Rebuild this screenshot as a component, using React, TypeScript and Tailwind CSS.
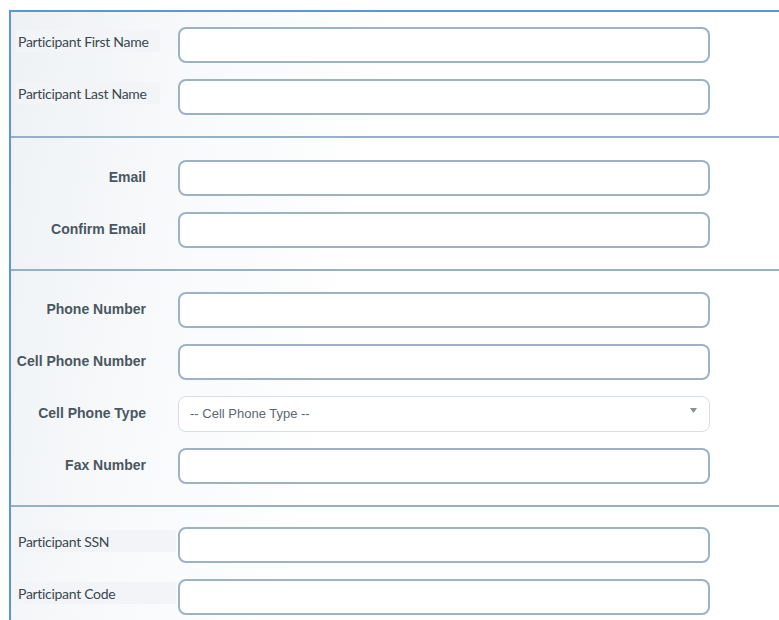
import React from "react";

type Field = { label: string; kind?: "input" | "select" };

const calibri = "font-['Lato','Open_Sans',sans-serif]";
const arial = "font-['Liberation_Sans',Arial,sans-serif]";

function TextBox() {
  return (
    <input
      type="text"
      className="h-[36px] w-[532px] rounded-[8px] border-2 border-[#9eb1c5] bg-white px-3 outline-none"
    />
  );
}

function SelectBox() {
  return (
    <div className="relative flex h-[36px] w-[532px] items-center rounded-[8px] border border-[#d6dee6] bg-white pl-[11px]">
      <span className={`${arial} text-[13px] text-[#5b6771]`}>-- Cell Phone Type --</span>
      <svg className="absolute right-[12px] top-[11px]" width="7" height="5" viewBox="0 0 7 5">
        <path d="M0 0 H7 L3.5 5 Z" fill="#8a8f94" />
      </svg>
    </div>
  );
}

function PlainRow({ field, wide }: { field: Field; wide?: boolean }) {
  return (
    <div className="flex items-start">
      <div className="w-[167px] pl-[5px] pt-[3px]">
        <div
          className={`${calibri} flex h-[22px] ${
            wide ? "w-[160px]" : "w-[144px]"
          } items-center pl-[2px] text-[14px] tracking-[-0.3px] text-[#3b4850] bg-[#f2f4f7]`}
        >
          {field.label}
        </div>
      </div>
      <TextBox />
    </div>
  );
}

function BoldRow({ field }: { field: Field }) {
  return (
    <div className="flex items-center">
      <div
        className={`${arial} w-[167px] pb-[2px] pr-[32px] text-right text-[14px] font-bold text-[#4a5660]`}
      >
        {field.label}
      </div>
      {field.kind === "select" ? <SelectBox /> : <TextBox />}
    </div>
  );
}

function Section({
  fields,
  plain,
  top,
  last,
}: {
  fields: Field[];
  plain?: boolean;
  top: string;
  last?: boolean;
}) {
  return (
    <>
      <div className={`flex flex-col gap-[16px] ${top} ${last ? "pb-[10px]" : "pb-[21px]"}`}>
        {fields.map((f) =>
          plain ? (
            <PlainRow key={f.label} field={f} wide={last} />
          ) : (
            <BoldRow key={f.label} field={f} />
          )
        )}
      </div>
      {!last && <div className="h-[2px] bg-[#98afc4]" />}
    </>
  );
}

export default function App() {
  return (
    <div className="min-h-[620px] bg-white pl-[9px] pt-[10px]">
      <div className="border-l-2 border-t-2 border-[#5b97d6] bg-[linear-gradient(100deg,#eef1f4_0%,#f6f8fa_18%,#ffffff_45%)]">
        <Section
          plain
          top="pt-[15px]"
          fields={[{ label: "Participant First Name" }, { label: "Participant Last Name" }]}
        />
        <Section
          top="pt-[22px]"
          fields={[{ label: "Email" }, { label: "Confirm Email" }]}
        />
        <Section
          top="pt-[21px]"
          fields={[
            { label: "Phone Number" },
            { label: "Cell Phone Number" },
            { label: "Cell Phone Type", kind: "select" },
            { label: "Fax Number" },
          ]}
        />
        <Section
          plain
          last
          top="pt-[20px]"
          fields={[{ label: "Participant SSN" }, { label: "Participant Code" }]}
        />
      </div>
    </div>
  );
}
